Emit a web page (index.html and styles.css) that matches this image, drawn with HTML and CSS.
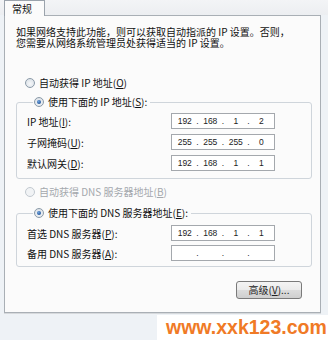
FILE: index.html
```html
<!DOCTYPE html>
<html lang="zh-CN">
<head>
<meta charset="utf-8">
<link rel="stylesheet" href="styles.css">
</head>
<body>
<div class="window">
  <div class="tabs"><div class="tab">常规</div></div>
  <div class="panel">
    <p class="intro">如果网络支持此功能，则可以获取自动指派的 IP 设置。否则，</p>
    <p class="intro">您需要从网络系统管理员处获得适当的 IP 设置。</p>
    <div class="radio r-first"><span class="knob"></span>自动获得 IP 地址(<u>O</u>)</div>
    <fieldset class="group g-ip">
      <legend><span class="radio"><span class="knob on"></span>使用下面的 IP 地址(<u>S</u>):</span></legend>
      <div class="row"><span class="lbl">IP 地址(<u>I</u>):</span><div class="ip"><span class="seg">192</span><span class="sep">.</span><span class="seg">168</span><span class="sep">.</span><span class="seg">1</span><span class="sep">.</span><span class="seg">2</span></div></div>
      <div class="row"><span class="lbl">子网掩码(<u>U</u>):</span><div class="ip"><span class="seg">255</span><span class="sep">.</span><span class="seg">255</span><span class="sep">.</span><span class="seg">255</span><span class="sep">.</span><span class="seg">0</span></div></div>
      <div class="row"><span class="lbl">默认网关(<u>D</u>):</span><div class="ip"><span class="seg">192</span><span class="sep">.</span><span class="seg">168</span><span class="sep">.</span><span class="seg">1</span><span class="sep">.</span><span class="seg">1</span></div></div>
    </fieldset>
    <div class="radio disabled r-dns"><span class="knob"></span>自动获得 DNS 服务器地址(<u>B</u>)</div>
    <fieldset class="group g-dns">
      <legend><span class="radio"><span class="knob on"></span>使用下面的 DNS 服务器地址(<u>E</u>):</span></legend>
      <div class="row"><span class="lbl">首选 DNS 服务器(<u>P</u>):</span><div class="ip"><span class="seg">192</span><span class="sep">.</span><span class="seg">168</span><span class="sep">.</span><span class="seg">1</span><span class="sep">.</span><span class="seg">1</span></div></div>
      <div class="row"><span class="lbl">备用 DNS 服务器(<u>A</u>):</span><div class="ip"><span class="seg"></span><span class="sep">.</span><span class="seg"></span><span class="sep">.</span><span class="seg"></span><span class="sep">.</span><span class="seg"></span></div></div>
    </fieldset>
    <div class="actions"><button class="btn">高级(<u>V</u>)...</button></div>
  </div>
  <div class="foot"><div class="wm">www.xxk123.com</div></div>
</div>
</body>
</html>
```

FILE: styles.css
```css
* { box-sizing: border-box; }
html, body { margin: 0; padding: 0; }
body {
  width: 328px;
  height: 340px;
  overflow: hidden;
  background: #eef2f6;
  font-family: "Noto Sans CJK SC", "Liberation Sans", sans-serif;
  font-size: 10px;
  color: #111;
}
.window { width: 328px; height: 340px; }
.tabs {
  height: 15px;
  padding-left: 4px;
  background: linear-gradient(#f3f4f6, #eceef1);
  display: flex;
  align-items: flex-end;
}
.tab {
  width: 41px;
  height: 16px;
  margin-bottom: -1px;
  background: #fbfbfb;
  border: 1px solid #9ba3ac;
  border-bottom: none;
  padding-left: 7px;
  line-height: 15px;
  position: relative;
  z-index: 1;
}
.panel {
  margin-left: 4px;
  width: 317px;
  height: 298px;
  background: #fbfbfb;
  border: 1px solid #a9afb5;
  padding: 11px 8px 0 11px;
  box-shadow: 0 1px 0 #d6d9dc;
}
.intro {
  margin: 0;
  height: 10.5px;
  line-height: 10.5px;
  white-space: nowrap;
}
.radio {
  display: flex;
  align-items: center;
  height: 12px;
  line-height: 12px;
  white-space: nowrap;
}
.knob {
  width: 10px;
  height: 10px;
  border-radius: 50%;
  border: 1px solid #8b9aa8;
  background: radial-gradient(circle at 50% 60%, #f6f8fa 0, #e2e7ec 60%, #d2d9e0 100%);
  margin-right: 4px;
  position: relative;
  flex: none;
}
.knob.on::after {
  content: "";
  position: absolute;
  left: 2px; top: 2px;
  width: 4px; height: 4px;
  border-radius: 50%;
  background: radial-gradient(circle at 40% 35%, #6fa3de, #1c4f95 80%);
}
.r-first { margin: 29px 0 0 9px; }
.disabled { color: #a4a8ad; }
.disabled .knob { border-color: #c2c9d0; background: #f1f3f5; }
.r-dns { margin: 7px 0 0 9px; }
.group {
  margin: 7px 0 0 0;
  width: 296px;
  border: 1px solid #cfd5db;
  border-radius: 3px;
  padding: 5px 0 7px 10px;
}
.group legend {
  padding: 0 3px 0 1px;
  margin-left: 6px;
}
.g-dns { margin-top: 9px; padding-top: 6px; padding-bottom: 5px; }
.row {
  display: flex;
  align-items: center;
  height: 16px;
}
.row + .row { margin-top: 5px; }
.g-dns .row + .row { margin-top: 4px; }
.lbl { width: 144px; white-space: nowrap; }
.ip {
  width: 104px;
  height: 16px;
  border: 1px solid #a4a8ad;
  background: #fff;
  display: flex;
  align-items: center;
  font-family: "Liberation Sans", sans-serif;
  font-size: 8.5px;
  color: #222;
  padding: 0 2px;
}
.seg { flex: 1; text-align: center; }
.sep { width: 4px; text-align: center; }
.actions {
  display: flex;
  justify-content: flex-end;
  width: 296px;
  margin-top: 14px;
  padding-right: 10px;
}
.btn {
  width: 66px;
  height: 18px;
  border: 1px solid #7a7a7a;
  border-radius: 3px;
  background: linear-gradient(#f4f4f4 0, #ebebeb 48%, #dcdcdc 52%, #cfcfcf 100%);
  font-family: "Noto Sans CJK SC", sans-serif;
  font-size: 10px;
  color: #222;
  padding: 0;
  line-height: 16px;
}
.foot {
  display: flex;
  justify-content: flex-end;
  margin-top: 2px;
}
.wm {
  width: 171px;
  height: 25px;
  background: #fff;
  font-family: "Liberation Sans", sans-serif;
  font-weight: bold;
  font-size: 19.5px;
  line-height: 25px;
  color: #f07a26;
  padding-left: 9px;
  white-space: nowrap;
}
```
